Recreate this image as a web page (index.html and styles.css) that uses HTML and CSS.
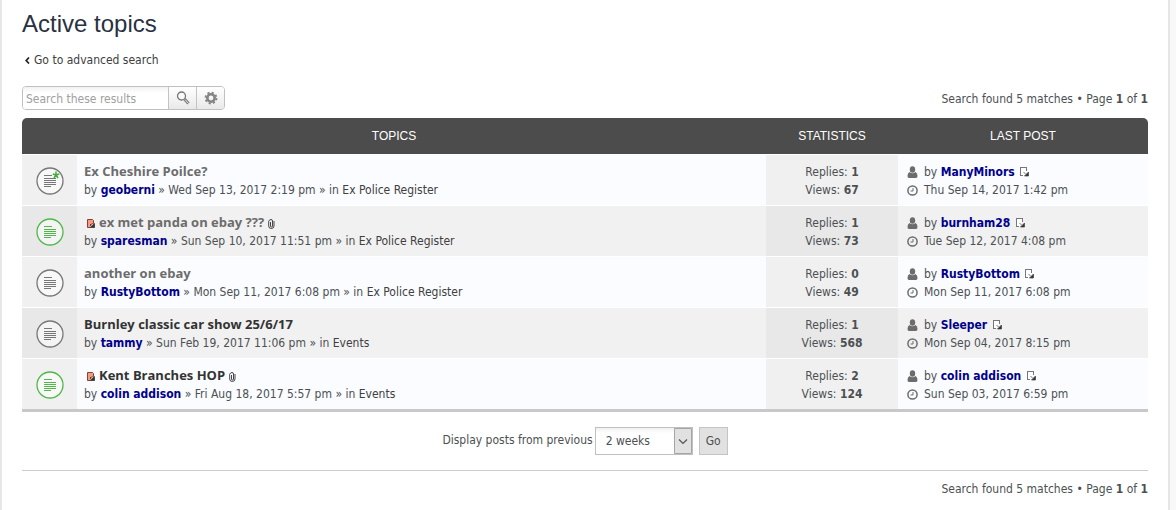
FILE: index.html
```
<!DOCTYPE html>
<html lang="en">
<head>
    <meta charset="UTF-8">
    <meta name="viewport" content="width=device-width, initial-scale=1.0">
    <title>Active topics</title>
    <link rel="stylesheet" href="styles.css">
</head>
<body>
    <svg width="0" height="0" class="sprites" aria-hidden="true">
        <symbol id="topic" viewBox="0 0 28 28">
            <circle cx="14" cy="14" r="13" fill="#fff" fill-opacity="0.5" stroke="currentColor" stroke-width="1.3"/>
            <path d="M8 8.500h8M8 11.500h12M8 13.500h12M8 15.500h12M8 17.500h12M8 19.500h7" fill="none" stroke="currentColor" shape-rendering="crispEdges"/>
        </symbol>
        <symbol id="star" viewBox="0 0 8 8">
            <path d="M4 4V0.500M4 4L0.800 3M4 4L7.200 3M4 4L2 7M4 4L6 7" fill="none" stroke="#3fae36" stroke-width="1.500"/>
        </symbol>
        <symbol id="unread" viewBox="0 0 9 10">
            <path d="M1.500 0.500h5l1 1v3l-3 1v3h-3z" fill="#f59a84" stroke="#7c3222" stroke-width="0.900"/>
            <path d="M4 5l2 2M8.500 4.500v4H4.500z" fill="#333" stroke="#333" stroke-width="0.800"/>
            <path d="M4.500 7.500l1-1" stroke="#fff"/>
        </symbol>
        <symbol id="latest" viewBox="0 0 9 10">
            <path d="M3 8.500H0.500v-8h6V4" fill="#fff" stroke="#777" shape-rendering="crispEdges"/>
            <path d="M3.500 5l2 2M8.500 5v4H4.500z" fill="#333" stroke="#444" stroke-width="0.700"/>
        </symbol>
        <symbol id="clip" viewBox="0 0 7 10">
            <path d="M2.500 3v4q0 1 1 1t1-1V2q0-1.500-1.500-1.500T0.700 2.200V7q0 2.500 2.600 2.500T6 7V2" fill="none" stroke="#333" stroke-width="0.900"/>
        </symbol>
        <symbol id="user" viewBox="0 0 10 12">
            <ellipse cx="5" cy="3.500" rx="2.700" ry="3.300"/>
            <path d="M2 6q-2 1-2 4 0 2 1.500 2h7Q10 12 10 10q0-3-2-4-3 2.500-6 0z"/>
        </symbol>
        <symbol id="clock" viewBox="0 0 11 11">
            <circle cx="5.500" cy="5.500" r="4.600" fill="none" stroke="currentColor" stroke-width="1.500"/>
            <path d="M6 3v3H3.500" fill="none" stroke="currentColor"/>
        </symbol>
        <symbol id="lens" viewBox="0 0 14 14">
            <circle cx="5.500" cy="5" r="4" fill="#fafafa" stroke="#777" stroke-width="1.300"/>
            <path d="M8.500 8l4 4.500" stroke="#777" stroke-width="3"/>
            <path d="M9 8.500l3.500 4" stroke="#eee"/>
        </symbol>
        <symbol id="gear" viewBox="0 0 14 14">
            <circle cx="7" cy="7" r="3.700" fill="none" stroke="#858585" stroke-width="2.600"/>
            <circle cx="7" cy="7" r="5.500" fill="none" stroke="#858585" stroke-width="1.800" stroke-dasharray="2.160 2.160"/>
        </symbol>
    </svg>

    <div id="wrap">
        <h1>Active topics</h1>
        <p class="back"><a href="#advanced"><svg width="5" height="7" viewBox="0 0 5 7"><path d="M4 0.500L1.200 3.500 4 6.500" fill="none" stroke="#222" stroke-width="1.700"/></svg>Go to advanced search</a></p>

        <div class="action-bar">
            <form class="search-box">
                <input type="search" aria-label="Search these results" placeholder="Search these results">
                <button type="button" title="Search"><svg width="14" height="14"><use href="#lens"/></svg></button>
                <button type="button" title="Advanced search"><svg width="14" height="14"><use href="#gear"/></svg></button>
            </form>
            <div class="pagination">Search found 5 matches • Page <b>1</b> of <b>1</b></div>
        </div>

        <table class="topics">
            <thead>
                <tr>
                    <th colspan="2">Topics</th>
                    <th class="stats">Statistics</th>
                    <th class="last">Last post</th>
                </tr>
            </thead>
            <tbody>
                <tr>
                    <td class="icon"><span class="topic-icon"><svg width="28" height="28"><use href="#topic"/></svg><svg class="star" width="8" height="8"><use href="#star"/></svg></span></td>
                    <td class="topic"><a class="title read" href="#t1">Ex Cheshire Poilce?</a><br>by <a class="user" href="#u">geoberni</a> » Wed Sep 13, 2017 2:19 pm » in <a href="#f">Ex Police Register</a></td>
                    <td class="stats">Replies: <b>1</b><br>Views: <b>67</b></td>
                    <td class="last"><svg class="meta" width="10" height="12"><use href="#user"/></svg>by <a class="user" href="#u">ManyMinors</a> <a class="latest" href="#p" title="View the latest post"><svg width="9" height="10"><use href="#latest"/></svg></a><br><svg class="meta" width="11" height="11"><use href="#clock"/></svg>Thu Sep 14, 2017 1:42 pm</td>
                </tr>
                <tr>
                    <td class="icon"><span class="topic-icon new"><svg width="28" height="28"><use href="#topic"/></svg></span></td>
                    <td class="topic"><a class="unread" href="#p" title="First unread post"><svg width="9" height="10"><use href="#unread"/></svg></a><a class="title read" href="#t2">ex met panda on ebay ???</a> <svg width="7" height="10"><use href="#clip"/></svg><br>by <a class="user" href="#u">sparesman</a> » Sun Sep 10, 2017 11:51 pm » in <a href="#f">Ex Police Register</a></td>
                    <td class="stats">Replies: <b>1</b><br>Views: <b>73</b></td>
                    <td class="last"><svg class="meta" width="10" height="12"><use href="#user"/></svg>by <a class="user" href="#u">burnham28</a> <a class="latest" href="#p" title="View the latest post"><svg width="9" height="10"><use href="#latest"/></svg></a><br><svg class="meta" width="11" height="11"><use href="#clock"/></svg>Tue Sep 12, 2017 4:08 pm</td>
                </tr>
                <tr>
                    <td class="icon"><span class="topic-icon"><svg width="28" height="28"><use href="#topic"/></svg></span></td>
                    <td class="topic"><a class="title read" href="#t3">another on ebay</a><br>by <a class="user" href="#u">RustyBottom</a> » Mon Sep 11, 2017 6:08 pm » in <a href="#f">Ex Police Register</a></td>
                    <td class="stats">Replies: <b>0</b><br>Views: <b>49</b></td>
                    <td class="last"><svg class="meta" width="10" height="12"><use href="#user"/></svg>by <a class="user" href="#u">RustyBottom</a> <a class="latest" href="#p" title="View the latest post"><svg width="9" height="10"><use href="#latest"/></svg></a><br><svg class="meta" width="11" height="11"><use href="#clock"/></svg>Mon Sep 11, 2017 6:08 pm</td>
                </tr>
                <tr>
                    <td class="icon"><span class="topic-icon"><svg width="28" height="28"><use href="#topic"/></svg></span></td>
                    <td class="topic"><a class="title" href="#t4">Burnley classic car show 25/6/17</a><br>by <a class="user" href="#u">tammy</a> » Sun Feb 19, 2017 11:06 pm » in <a href="#f">Events</a></td>
                    <td class="stats">Replies: <b>1</b><br>Views: <b>568</b></td>
                    <td class="last"><svg class="meta" width="10" height="12"><use href="#user"/></svg>by <a class="user" href="#u">Sleeper</a> <a class="latest" href="#p" title="View the latest post"><svg width="9" height="10"><use href="#latest"/></svg></a><br><svg class="meta" width="11" height="11"><use href="#clock"/></svg>Mon Sep 04, 2017 8:15 pm</td>
                </tr>
                <tr>
                    <td class="icon"><span class="topic-icon new"><svg width="28" height="28"><use href="#topic"/></svg></span></td>
                    <td class="topic"><a class="unread" href="#p" title="First unread post"><svg width="9" height="10"><use href="#unread"/></svg></a><a class="title" href="#t5">Kent Branches HOP</a> <svg width="7" height="10"><use href="#clip"/></svg><br>by <a class="user" href="#u">colin addison</a> » Fri Aug 18, 2017 5:57 pm » in <a href="#f">Events</a></td>
                    <td class="stats">Replies: <b>2</b><br>Views: <b>124</b></td>
                    <td class="last"><svg class="meta" width="10" height="12"><use href="#user"/></svg>by <a class="user" href="#u">colin addison</a> <a class="latest" href="#p" title="View the latest post"><svg width="9" height="10"><use href="#latest"/></svg></a><br><svg class="meta" width="11" height="11"><use href="#clock"/></svg>Sun Sep 03, 2017 6:59 pm</td>
                </tr>
            </tbody>
        </table>

        <form class="display-options">
            <label for="st">Display posts from previous</label>
            <span class="select">
                <select id="st">
                    <option>2 weeks</option>
                </select>
                <svg width="18" height="26" viewBox="0 0 18 26"><path d="M0.500 0.500h17v25h-17z" fill="#e1e1e1" stroke="#a5a5a5"/><path d="M5 11.500l4 4 4-4" fill="none" stroke="#555" stroke-width="1.200"/></svg>
            </span>
            <button type="button">Go</button>
        </form>
        <hr>
        <div class="pagination">Search found 5 matches • Page <b>1</b> of <b>1</b></div>
    </div>
</body>
</html>
```
FILE: styles.css
```
* {
    box-sizing: border-box;
}
body {
    margin: 0;
    background-color: #f8f8f8;
    color: #4c5053;
    font-family: "DejaVu Sans Condensed", Tahoma, sans-serif;
    font-size: 12px;
    line-height: 18px;
}
.sprites {
    position: absolute;
}
#wrap {
    margin-right: 6px;
    padding: 8px 20px 12px;
    border: solid #e6e6e6;
    border-width: 0 2px;
    background-color: #ffffff;
}
h1 {
    margin: 0;
    color: #28313f;
    font-family: "Liberation Sans", Arial, sans-serif;
    font-size: 24px;
    font-weight: normal;
    line-height: 32px;
}
a {
    color: #404040;
    text-decoration: none;
}
a:hover {
    text-decoration: underline;
}
.back {
    margin: 11px 0 17px;
}
.back a {
    display: flex;
    align-items: center;
    gap: 4px;
    padding-left: 3px;
}
.action-bar {
    display: flex;
    justify-content: space-between;
    align-items: flex-end;
    margin-bottom: 8px;
}
.action-bar .pagination {
    padding-bottom: 2px;
}
.search-box {
    display: flex;
    height: 24px;
    border: 1px solid #c0c0c0;
    border-radius: 4px;
    overflow: hidden;
}
.search-box input {
    width: 145px;
    padding: 1px 3px 0;
    border: none;
    background: linear-gradient(#f2f2f2, #ffffff 6px);
    font: inherit;
    outline: none;
}
.search-box input::placeholder {
    color: #a0a0a0;
}
.search-box button {
    display: flex;
    align-items: center;
    justify-content: center;
    width: 28px;
    padding: 0;
    border: none;
    border-left: 1px solid #c7c3bf;
    background: linear-gradient(#ffffff, #e9e9e9);
    cursor: pointer;
}
.pagination {
    text-align: right;
}

/* Topic list */
.topics {
    width: 100%;
    border-spacing: 0;
    border-bottom: 3px solid #c8c8c8;
}
.topics th {
    height: 36px;
    padding: 0;
    background-color: #4c4c4c;
    color: #ffffff;
    font-family: "Liberation Sans", Arial, sans-serif;
    font-weight: normal;
    text-transform: uppercase;
}
.topics th:first-child {
    border-top-left-radius: 5px;
}
.topics th:last-child {
    border-top-right-radius: 5px;
}
.topics td {
    padding: 8px 7px 6px;
    border-top: 1px solid #ffffff;
    background-color: #fafcff;
}
.topics tr:nth-child(even) td {
    background-color: #f1f1f1;
}
.topics td.icon,
.topics td.stats {
    background-color: #f0f0f0;
}
.topics tr:nth-child(even) td.icon,
.topics tr:nth-child(even) td.stats {
    background-color: #e8e8e8;
}
.topics .icon {
    width: 55px;
}
.topics .stats {
    width: 132px;
    text-align: center;
}
.topics .last {
    width: 250px;
}
.topics td.last {
    padding-left: 9px;
}
.topic-icon {
    display: block;
    position: relative;
    width: 28px;
    height: 28px;
    margin: 0 auto;
    color: #777777;
}
.topic-icon svg {
    display: block;
}
.topic-icon.new {
    color: #4fb848;
}
.topic-icon .star {
    position: absolute;
    top: 4px;
    right: 4px;
}
.title {
    color: #333333;
    font-family: "Open Sans", "Trebuchet MS", sans-serif;
    font-size: 13px;
    font-weight: bold;
    line-height: 16px;
}
.title.read {
    color: #6c6c6c;
}
.user {
    color: #00008b;
    font-weight: bold;
}
.topics td svg {
    vertical-align: -2px;
}
.topics .latest svg {
    margin-left: 2px;
    vertical-align: -1px;
}
.unread {
    margin: 0 4px 0 2px;
}
.meta {
    width: 11px;
    margin-right: 6px;
    color: #6c6c6c;
    fill: #6c6c6c;
}

.display-options {
    display: flex;
    justify-content: center;
    gap: 6px;
    margin-top: 15px;
}
.display-options label {
    line-height: 26px;
}
.select {
    position: relative;
    margin-left: -4px;
}
.select select {
    display: block;
    appearance: none;
    width: 98px;
    height: 28px;
    padding: 0 20px 0 10px;
    border: 1px solid #c0c0c0;
    border-radius: 0;
    background: linear-gradient(#f0f0f0, #ffffff 5px);
    color: #4c5053;
    font: inherit;
}
.select svg {
    position: absolute;
    top: 1px;
    right: 1px;
    pointer-events: none;
}
.display-options button {
    width: 29px;
    height: 28px;
    padding: 0;
    border: 1px solid #c7c3bf;
    background-color: #e1e1e1;
    color: #4c5053;
    font: inherit;
    cursor: pointer;
}
hr {
    height: 1px;
    margin: 15px 0 9px;
    border: none;
    background-color: #cccccc;
}
```
